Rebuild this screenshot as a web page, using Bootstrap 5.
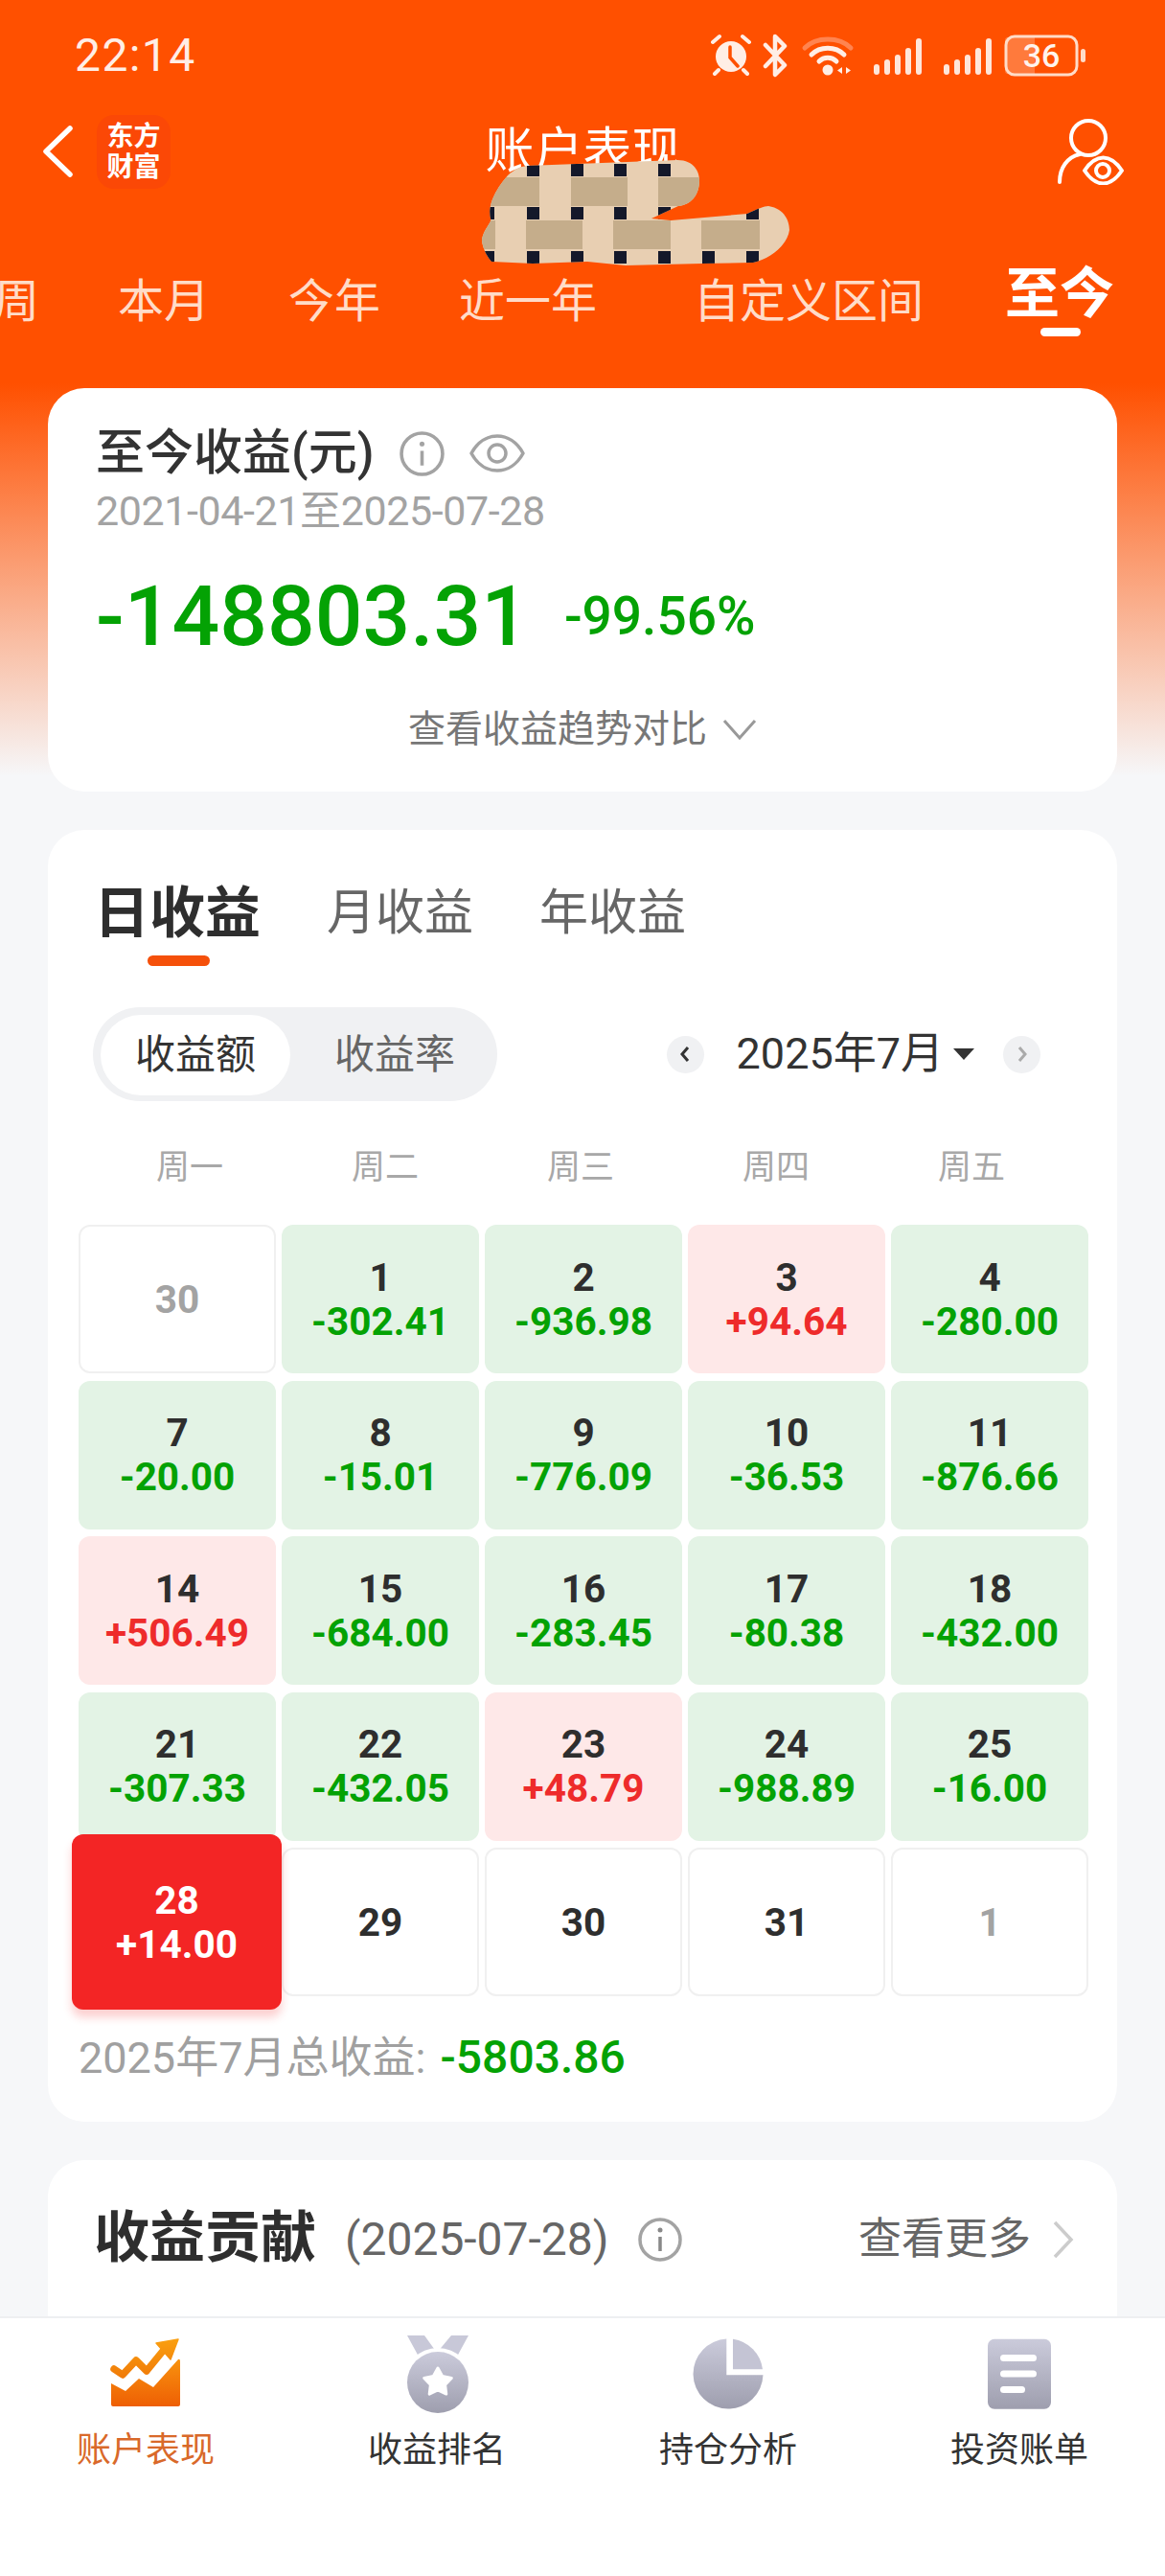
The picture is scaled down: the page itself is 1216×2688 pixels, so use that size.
<!DOCTYPE html>
<html lang="zh-CN">
<head>
<meta charset="utf-8">
<meta name="viewport" content="width=device-width, initial-scale=1">
<title>账户表现</title>
<link href="https://cdn.jsdelivr.net/npm/bootstrap@5.3.3/dist/css/bootstrap.min.css" rel="stylesheet" crossorigin="anonymous">
<script src="https://cdn.jsdelivr.net/npm/bootstrap@5.3.3/dist/js/bootstrap.bundle.min.js" crossorigin="anonymous"></script>
<style>
  html, body { width: 1216px; height: 2688px; overflow: hidden; }
  body { font-family: Roboto, "Noto Sans CJK SC", sans-serif; color: #333; background: #f6f7f9; }
  .app-shell { height: 2688px; }
  .app-scroll { background: linear-gradient(#ff5000 0, #ff5000 400px, #f6f7f9 810px); }

  /* status bar + header */
  .status-row { height: 116px; padding: 0 82px 0 78px; color: #ffeee6; }
  .status-time { font-size: 48px; line-height: 1; letter-spacing: 1.4px; }
  .batt-text { font-family: Roboto, sans-serif; font-size: 34px; font-weight: 500; fill: #fff3ec; }
  .header-row { height: 56px; margin-top: 14px; padding: 0 43px 0 44px; }
  .header-side { flex: 1 1 0; }
  .logo-tile { width: 77px; height: 77px; border-radius: 18px; background: #fb4806; color: #fff; font-size: 28px; line-height: 32px; font-weight: 700; margin-left: 25px; text-align: center; padding-top: 7px; }
  .header-title { font-size: 51px; line-height: 56px; color: #fff; }
  .scribble { position: absolute; left: 480px; top: 120px; }
  .range-tabs { height: 70px; margin: 94px 0 55px -7px; gap: 82px; white-space: nowrap; color: #ffdcc8; font-size: 48px; line-height: 70px; }
  .range-gap { margin-left: 19px; }
  .range-on { font-size: 57px; font-weight: 700; color: #fff; margin-top: -8px; margin-left: 3px; position: relative; }
  .range-on::after { content: ""; position: absolute; left: 37px; top: 70px; width: 42px; height: 9px; border-radius: 5px; background: #fff; }

  /* cards */
  .panel { margin: 0 50px 40px; border-radius: 38px; background: #fff; }
  .sum-body { padding: 40px 0 40px 50px; }
  .sum-title { font-size: 51px; line-height: 56px; font-weight: 500; }
  .sum-icon { margin-left: 26px; }
  .sum-date { margin-top: 9px; font-size: 43px; line-height: 46px; color: #a3a3a3; letter-spacing: -.4px; }
  .sum-figures { margin-top: 42px; }
  .sum-big { font-size: 87.5px; line-height: 90px; font-weight: 500; color: #04a204; }
  .sum-pct { font-size: 55px; font-weight: 500; color: #04a204; margin-left: 37px; line-height: 90px; }
  .sum-link { margin: 48px 0 0 -50px; font-size: 39px; line-height: 50px; color: #777; }

  .period-tabs { padding: 52px 0 0 48px; gap: 69px; color: #666; font-size: 51px; line-height: 70px; }
  .period-on { font-size: 58px; font-weight: 700; color: #2e2e2e; position: relative; }
  .period-on::after { content: ""; position: absolute; left: 56px; top: 79px; width: 65px; height: 11px; border-radius: 6px; background: #f5500a; }
  .tools-row { margin: 63px 80px 0 47px; }
  .seg-wrap { width: 422px; height: 98px; padding: 8px; border-radius: 49px; background: #f0f1f3; font-size: 42px; color: #666; }
  .seg-on { width: 198px; height: 84px; line-height: 84px; border-radius: 42px; background: #fff; color: #333; text-align: center; }
  .seg-off { width: 190px; margin-left: 14px; line-height: 84px; text-align: center; }
  .round-arrow { width: 39px; height: 39px; border-radius: 50%; background: #f0f1f3; }
  .month-label { font-size: 45px; line-height: 60px; color: #333; margin: 0 10px 0 34px; }
  .month-caret { width: 0; height: 0; border-left: 11px solid transparent; border-right: 11px solid transparent; border-top: 12px solid #333; margin-right: 30px; }
  .week-row { display: grid; grid-template-columns: repeat(5, 204px); margin: 45px 0 34px 46px; font-size: 35px; line-height: 50px; color: #a8a8a8; text-align: center; }
  .day-grid { display: grid; grid-template-columns: repeat(5, 1fr); grid-auto-rows: 155px; gap: 7.5px 6px; margin: 0 30px 0 32px; }
  .day-cell { border-radius: 12px; font-size: 40.5px; line-height: 46px; font-weight: 700; display: flex; flex-direction: column; align-items: center; justify-content: center; }
  .day-empty { border: 2px solid #f0f0f0; color: #2e2e2e; }
  .day-muted { color: #a3a3a3; }
  .day-down { background: #e3f3e5; color: #2e2e2e; }
  .day-down span { color: #04a204; }
  .day-up { background: #fee8e8; color: #2e2e2e; }
  .day-up span { color: #ee2b2b; }
  .day-now { background: #f32525; color: #fff; margin: -14px -6px -14px -7px; position: relative; z-index: 1; box-shadow: 0 8px 10px rgba(243, 37, 37, .22); }
  .month-total { margin: 39px 0 0 32px; padding-bottom: 41px; font-size: 45px; line-height: 50px; color: #a0a0a0; }
  .month-total b { font-size: 48px; font-weight: 500; color: #04a204; margin-left: 4px; }

  .share-head { padding: 48px 44px 0 48px; height: 300px; }
  .share-title { font-size: 58px; line-height: 66px; font-weight: 700; color: #2e2e2e; }
  .share-line { height: 66px; padding-top: 3px; }
  .share-date { font-size: 48px; color: #666; margin: 0 30px; }
  .share-more { font-size: 45px; color: #666; margin-right: 22px; }

  /* bottom tabs */
  .tab-bar { height: 271px; background: #fff; border-top: 2px solid #eeeff1; padding-top: 18px; }
  .tab-item { width: 304px; text-align: center; font-size: 36px; line-height: 44px; color: #333; }
  .tab-item svg { display: block; margin: 0 auto; }
  .tab-icon { height: 82px; margin-bottom: 16px; }
  .tab-active { color: #d9692a; }
</style>
</head>
<body>
<div class="app-shell d-flex flex-column position-relative overflow-hidden">
  <div class="app-scroll flex-grow-1 overflow-hidden">
    <!-- status bar -->
    <div class="status-row d-flex align-items-center justify-content-between">
      <div class="status-time">22:14</div>
      <svg width="392" height="46" viewBox="0 0 392 46" fill="none">
        <!-- alarm -->
        <g stroke="#ffeee6" stroke-width="4" stroke-linecap="round">
          <path d="M2 9 9 3M40 9 33 3M8 38 4 42M34 38 38 42"/>
        </g>
        <circle cx="21" cy="24" r="16" fill="#ffeee6"/>
        <path d="M20 14v11l8 9" stroke="#ff5000" stroke-width="3.5" fill="none" stroke-linecap="round"/>
        <!-- bluetooth -->
        <path d="M58 12 78 33 68 43V3L78 13 58 34" transform="translate(-1 0)" stroke="#ffeee6" stroke-width="4.5" stroke-linecap="round" stroke-linejoin="round"/>
        <!-- wifi -->
        <path d="M98 15C110 3 134 3 146 15" stroke="#ff8450" stroke-width="5" stroke-linecap="round"/>
        <path d="M105 22C114 13 130 13 139 22M113 29C118 24 126 24 131 29" stroke="#ffeee6" stroke-width="5" stroke-linecap="round"/>
        <circle cx="122" cy="38" r="5.5" fill="#ffeee6"/>
        <path d="M137 35v7l-5-3.500zM141 35v7l5-3.500z" fill="#ffeee6"/>
        <!-- signal bars -->
        <g stroke="#ffe6da" stroke-width="6" stroke-linecap="round">
          <path d="M173 35v5M184 30v10M195 25v15M206 18v22M217 8v32"/>
          <path d="M246 35v5M257 30v10M268 25v15M279 18v22M290 8v32"/>
        </g>
        <!-- battery -->
        <path d="M310 4H338V42H310Q307 42 307 39V7Q307 4 310 4Z" fill="#ff7a3c"/>
        <rect x="308" y="3" width="74" height="40" rx="9" stroke="#ffdcc8" stroke-width="3"/>
        <text class="batt-text" x="345" y="35" text-anchor="middle">36</text>
        <rect x="386" y="16" width="5" height="14" rx="2.500" fill="#ffdcc8"/>
      </svg>
    </div>
    <!-- header row -->
    <div class="header-row d-flex align-items-center">
      <div class="header-side d-flex align-items-center">
        <svg width="32" height="54" viewBox="0 0 32 54" fill="none"><path d="M29 3 4 27l25 24" stroke="#fff" stroke-width="5.500" stroke-linecap="round" stroke-linejoin="round"/></svg>
        <div class="logo-tile">东方<br>财富</div>
      </div>
      <div class="header-title">账户表现</div>
      <div class="header-side d-flex justify-content-end">
        <svg width="70" height="70" viewBox="0 0 70 70" fill="none" stroke="#fff" stroke-width="4" stroke-linecap="round">
          <circle cx="33" cy="21" r="18"/>
          <path d="M3 67C3 52 11 41 24 38"/>
          <path d="M29 55C41 37 56 37 68 55 56 73 41 73 29 55Z" stroke-linejoin="round"/>
          <circle cx="48" cy="55" r="7"/>
        </svg>
      </div>
    </div>
    <!-- scribbled-over account name -->
    <svg class="scribble" width="360" height="160" viewBox="0 0 360 160">
      <defs>
        <clipPath id="scribbleClip">
          <path d="M50 63C58 56 62 54 70 53L227 47C245 47 250 60 250 68 250 85 240 94 228 95L200 108 220 110 300 103C310 98 318 95 322 95 340 98 344 112 344 120 342 135 325 150 306 154L253 155 173 157 133 153 76 155 33 153C26 145 23 135 23 130 25 118 34 112 32 108 30 100 31 85 50 63Z"/>
        </clipPath>
      </defs>
      <g clip-path="url(#scribbleClip)">
        <rect x="0" y="40" width="360" height="120" fill="#e8cfb2"/>
        <path d="M20 65H83V95H20ZM116 65H175V95H116ZM207 65H260V95H207Z" fill="#c5ad8b"/>
        <path d="M0 110H37V140H0ZM69 110H128V140H69ZM160 110H220V140H160ZM252 110H313V140H252Z" fill="#c5ad8b"/>
        <g fill="#14182a">
          <rect x="70" y="51" width="13" height="13"/><rect x="116" y="51" width="13" height="13"/><rect x="161" y="51" width="13" height="13"/><rect x="207" y="51" width="13" height="13"/>
          <rect x="26" y="96" width="10" height="13"/><rect x="70" y="96" width="13" height="13"/><rect x="116" y="96" width="13" height="13"/><rect x="161" y="96" width="13" height="13"/><rect x="207" y="96" width="13" height="13"/><rect x="299" y="96" width="13" height="13"/>
          <rect x="26" y="142" width="10" height="13"/><rect x="70" y="142" width="13" height="13"/><rect x="116" y="142" width="13" height="13"/><rect x="161" y="142" width="13" height="13"/><rect x="207" y="142" width="13" height="13"/><rect x="253" y="142" width="13" height="13"/><rect x="299" y="142" width="13" height="13"/>
        </g>
      </g>
    </svg>
    <!-- range tabs -->
    <div class="range-tabs d-flex">
      <div>周</div>
      <div>本月</div>
      <div>今年</div>
      <div>近一年</div>
      <div class="range-gap">自定义区间</div>
      <div class="range-on">至今</div>
    </div>

    <!-- total return -->
    <section class="panel card border-0">
      <div class="sum-body">
        <div class="d-flex align-items-center">
          <div class="sum-title">至今收益(元)</div>
          <svg class="sum-icon" width="47" height="47" viewBox="0 0 46 46" fill="none"><circle cx="23" cy="23" r="21" stroke="#a3a3a3" stroke-width="3.500"/><circle cx="23" cy="13" r="2.500" fill="#a3a3a3"/><path d="M23 20v15" stroke="#a3a3a3" stroke-width="3.500"/></svg>
          <svg class="sum-icon" width="58" height="46" viewBox="0 0 58 46" fill="none" stroke="#a3a3a3" stroke-width="3.500" stroke-linejoin="round"><path d="M2 23C15 -1 43 -1 56 23 43 47 15 47 2 23Z"/><circle cx="29" cy="23" r="9"/></svg>
        </div>
        <div class="sum-date">2021-04-21至2025-07-28</div>
        <div class="sum-figures d-flex">
          <div class="sum-big">-148803.31</div>
          <div class="sum-pct">-99.56%</div>
        </div>
        <div class="sum-link d-flex align-items-center justify-content-center">
          查看收益趋势对比
          <svg class="ms-3" width="36" height="24" viewBox="0 0 36 24" fill="none"><path d="M2 3 18 21 34 3" stroke="#999" stroke-width="3"/></svg>
        </div>
      </div>
    </section>

    <!-- daily / monthly / yearly calendar -->
    <section class="panel card border-0">
      <div class="period-tabs d-flex align-items-center">
        <div class="period-on">日收益</div>
        <div>月收益</div>
        <div>年收益</div>
      </div>
      <div class="tools-row d-flex align-items-center justify-content-between">
        <div class="seg-wrap d-flex">
          <div class="seg-on">收益额</div>
          <div class="seg-off">收益率</div>
        </div>
        <div class="d-flex align-items-center">
          <div class="round-arrow d-flex align-items-center justify-content-center">
            <svg width="14" height="20" viewBox="0 0 14 20" fill="none"><path d="M10 3 4 10l6 7" stroke="#333" stroke-width="3"/></svg>
          </div>
          <div class="month-label">2025年7月</div>
          <div class="month-caret"></div>
          <div class="round-arrow d-flex align-items-center justify-content-center">
            <svg width="14" height="20" viewBox="0 0 14 20" fill="none"><path d="M4 3l6 7-6 7" stroke="#aaa" stroke-width="3"/></svg>
          </div>
        </div>
      </div>
      <div class="week-row"><div>周一</div><div>周二</div><div>周三</div><div>周四</div><div>周五</div></div>
      <div class="day-grid" id="dayGrid"></div>
      <div class="month-total">2025年7月总收益: <b>-5803.86</b></div>
    </section>

    <!-- contribution -->
    <section class="panel card border-0 mb-0">
      <div class="share-head d-flex align-items-start">
        <div class="share-title">收益贡献</div>
        <div class="share-line d-flex align-items-center flex-grow-1">
          <div class="share-date">(2025-07-28)</div>
          <svg width="46" height="46" viewBox="0 0 46 46" fill="none"><circle cx="23" cy="23" r="21" stroke="#a3a3a3" stroke-width="3.500"/><circle cx="23" cy="13" r="2.500" fill="#888"/><path d="M23 20v15" stroke="#888" stroke-width="3.500"/></svg>
          <div class="share-more ms-auto">查看更多</div>
          <svg width="24" height="40" viewBox="0 0 24 40" fill="none"><path d="M3 2l17 18L3 38" stroke="#ccc" stroke-width="3.500"/></svg>
        </div>
      </div>
    </section>
  </div>

  <!-- bottom tabs -->
  <nav class="tab-bar d-flex flex-shrink-0">
    <div class="tab-item tab-active">
      <div class="tab-icon">
        <svg width="74" height="82" viewBox="0 0 74 82" fill="none">
          <defs>
            <linearGradient id="chartFill" x1="0" y1="0" x2="0" y2="1"><stop offset="0" stop-color="#f8920e"/><stop offset="1" stop-color="#ee5f04"/></linearGradient>
            <linearGradient id="chartLine" gradientUnits="userSpaceOnUse" x1="0" y1="4" x2="0" y2="45"><stop offset="0" stop-color="#fa9f10"/><stop offset="1" stop-color="#f07a08"/></linearGradient>
          </defs>
          <path d="M1 50 16 58 30 45 45 54 71 25Q73 24 73 27V72Q73 74 71 74H3Q1 74 1 72Z" fill="url(#chartFill)"/>
          <path d="M4 35 13 41 27 26 38 37 56 15" stroke="url(#chartLine)" stroke-width="7.500" stroke-linecap="round" stroke-linejoin="round"/>
          <path d="M48 8 71 4 63 25Z" fill="url(#chartLine)" stroke="url(#chartLine)" stroke-width="1.500" stroke-linejoin="round"/>
        </svg>
      </div>
      账户表现
    </div>
    <div class="tab-item">
      <div class="tab-icon">
        <svg width="66" height="82" viewBox="0 0 66 82">
          <defs>
            <linearGradient id="greyFill" x1="0" y1="0" x2="0" y2="1"><stop offset="0" stop-color="#cbcbdb"/><stop offset="1" stop-color="#9e9eae"/></linearGradient>
          </defs>
          <path d="M2 0H20L33 18 48 0H66L54 22 34 16 14 22Z" fill="#c8c8d8"/>
          <circle cx="34" cy="49" r="36" fill="#fff"/>
          <circle cx="34" cy="49" r="32" fill="url(#greyFill)"/>
          <path d="M34 34 38.700 42.500 48.300 44.400 41.600 51.500 42.800 61.100 34 57 25.200 61.100 26.400 51.500 19.700 44.400 29.300 42.500Z" fill="#fff" stroke="#fff" stroke-width="3" stroke-linejoin="round"/>
        </svg>
      </div>
      收益排名
    </div>
    <div class="tab-item">
      <div class="tab-icon">
        <svg width="74" height="82" viewBox="0 0 74 82">
          <path d="M35.300 3.600A36.500 36.500 0 1 0 73.500 41.300H35.300Z" fill="url(#greyFill)"/>
          <path d="M42 3.800A36.500 36.500 0 0 1 73 35.300H42Z" fill="#c4c4d4"/>
        </svg>
      </div>
      持仓分析
    </div>
    <div class="tab-item">
      <div class="tab-icon">
        <svg width="66" height="82" viewBox="0 0 66 82">
          <rect y="3.700" width="66" height="73" rx="7" fill="url(#greyFill)"/>
          <rect x="13" y="20" width="38" height="7" rx="3.500" fill="#fff"/>
          <rect x="13" y="36.500" width="38" height="7" rx="3.500" fill="#fff"/>
          <rect x="13" y="53" width="26" height="7" rx="3.500" fill="#fff"/>
        </svg>
      </div>
      投资账单
    </div>
  </nav>
</div>
<script>
  // one entry per trading day: [day, value, css class]
  const days = [
    [30, '', 'day-empty day-muted'], [1, '-302.41', 'day-down'], [2, '-936.98', 'day-down'], [3, '+94.64', 'day-up'], [4, '-280.00', 'day-down'],
    [7, '-20.00', 'day-down'], [8, '-15.01', 'day-down'], [9, '-776.09', 'day-down'], [10, '-36.53', 'day-down'], [11, '-876.66', 'day-down'],
    [14, '+506.49', 'day-up'], [15, '-684.00', 'day-down'], [16, '-283.45', 'day-down'], [17, '-80.38', 'day-down'], [18, '-432.00', 'day-down'],
    [21, '-307.33', 'day-down'], [22, '-432.05', 'day-down'], [23, '+48.79', 'day-up'], [24, '-988.89', 'day-down'], [25, '-16.00', 'day-down'],
    [28, '+14.00', 'day-now'], [29, '', 'day-empty'], [30, '', 'day-empty'], [31, '', 'day-empty'], [1, '', 'day-empty day-muted']
  ];
  document.getElementById('dayGrid').innerHTML = days.map(function (d) {
    return '<div class="day-cell ' + d[2] + '"><div>' + d[0] + '</div>' + (d[1] ? '<span>' + d[1] + '</span>' : '') + '</div>';
  }).join('');
</script>
</body>
</html>
